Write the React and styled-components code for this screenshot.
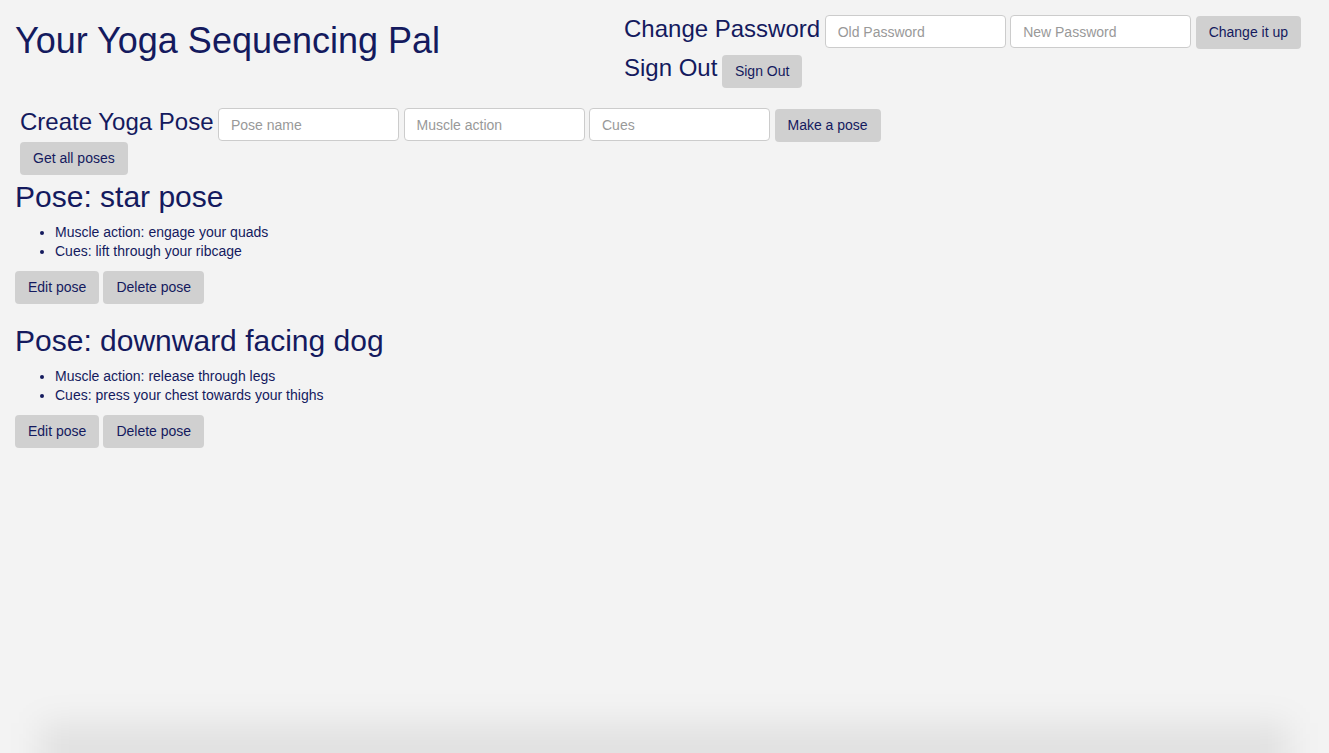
import React from "react";
import styled, { createGlobalStyle } from "styled-components";

const navy = "#141a5e";

const GlobalStyle = createGlobalStyle`
  html, body {
    margin: 0;
    padding: 0;
    background: #f3f3f3;
  }
  body {
    font-family: "Liberation Sans", Helvetica, Arial, sans-serif;
    font-size: 14px;
    line-height: 1.42857;
    color: ${navy};
    min-height: 753px;
    overflow: hidden;
  }
  * { box-sizing: border-box; }
`;

const Page = styled.div`
  padding: 0 15px;
  min-height: 753px;
`;

const WindowShadow = styled.div`
  position: fixed;
  left: 40px;
  right: 40px;
  bottom: -30px;
  height: 60px;
  background: rgba(0, 0, 0, 0.07);
  filter: blur(16px);
  pointer-events: none;
`;

const Header = styled.header`
  display: flex;
  align-items: flex-start;
`;

const Title = styled.h1`
  flex: 0 0 609px;
  margin: 21px 0 0;
  font-size: 36px;
  font-weight: 400;
  line-height: 1.1;
`;

const Account = styled.div`
  margin-top: 15px;
  display: flex;
  flex-direction: column;
  gap: 6px;
`;

const FormRow = styled.div`
  display: flex;
  align-items: flex-start;
  gap: 4.5px;
`;

const FormLabel = styled.h3`
  margin: ${(p) => p.$offset ?? "0"} 0 0;
  font-size: 24px;
  font-weight: 400;
  line-height: 1.1;
  white-space: nowrap;
`;

const Input = styled.input`
  width: 181px;
  height: 33px;
  padding: 6px 12px;
  border: 1px solid #cccccc;
  border-radius: 4px;
  background: #ffffff;
  font-family: inherit;
  font-size: 14px;
  color: #555555;
  outline: none;
  &::placeholder {
    color: #999999;
  }
`;

const Button = styled.button`
  display: inline-block;
  height: 33px;
  margin-top: ${(p) => p.$top ?? "0"};
  padding: 0 13px;
  border: none;
  border-radius: 4px;
  background: #d0d0d0;
  font-family: inherit;
  font-size: 14px;
  line-height: 33px;
  color: ${navy};
  white-space: nowrap;
  cursor: pointer;
`;

const CreateForm = styled.section`
  margin-top: 20px;
  padding-left: 5px;
  display: flex;
  flex-direction: column;
  align-items: flex-start;
`;

const PoseBlock = styled.article`
  margin-bottom: 20px;
`;

const PoseTitle = styled.h2`
  margin: 5px 0 10px;
  font-size: 30px;
  font-weight: 400;
  line-height: 1.1;
`;

const Details = styled.ul`
  margin: 0 0 11px;
  padding-left: 40px;
  line-height: 18.5px;
`;

const Actions = styled.div`
  display: flex;
  gap: 4px;
`;

const poses = [
  { name: "star pose", action: "engage your quads", cues: "lift through your ribcage" },
  { name: "downward facing dog", action: "release through legs", cues: "press your chest towards your thighs" },
];

export default function App() {
  return (
    <>
      <GlobalStyle />
      <Page>
        <Header>
          <Title>Your Yoga Sequencing Pal</Title>
          <Account>
            <FormRow>
              <FormLabel $offset="0.5px">Change Password</FormLabel>
              <Input type="password" placeholder="Old Password" />
              <Input type="password" placeholder="New Password" />
              <Button $top="1px">Change it up</Button>
            </FormRow>
            <FormRow>
              <FormLabel $offset="0">Sign Out</FormLabel>
              <Button>Sign Out</Button>
            </FormRow>
          </Account>
        </Header>

        <CreateForm>
          <FormRow>
            <FormLabel $offset="1px">Create Yoga Pose</FormLabel>
            <Input placeholder="Pose name" />
            <Input placeholder="Muscle action" />
            <Input placeholder="Cues" />
            <Button $top="1px">Make a pose</Button>
          </FormRow>
          <Button>Get all poses</Button>
        </CreateForm>

        {poses.map((p) => (
          <PoseBlock key={p.name}>
            <PoseTitle>Pose: {p.name}</PoseTitle>
            <Details>
              <li>Muscle action: {p.action}</li>
              <li>Cues: {p.cues}</li>
            </Details>
            <Actions>
              <Button>Edit pose</Button>
              <Button>Delete pose</Button>
            </Actions>
          </PoseBlock>
        ))}
      </Page>
      <WindowShadow />
    </>
  );
}
